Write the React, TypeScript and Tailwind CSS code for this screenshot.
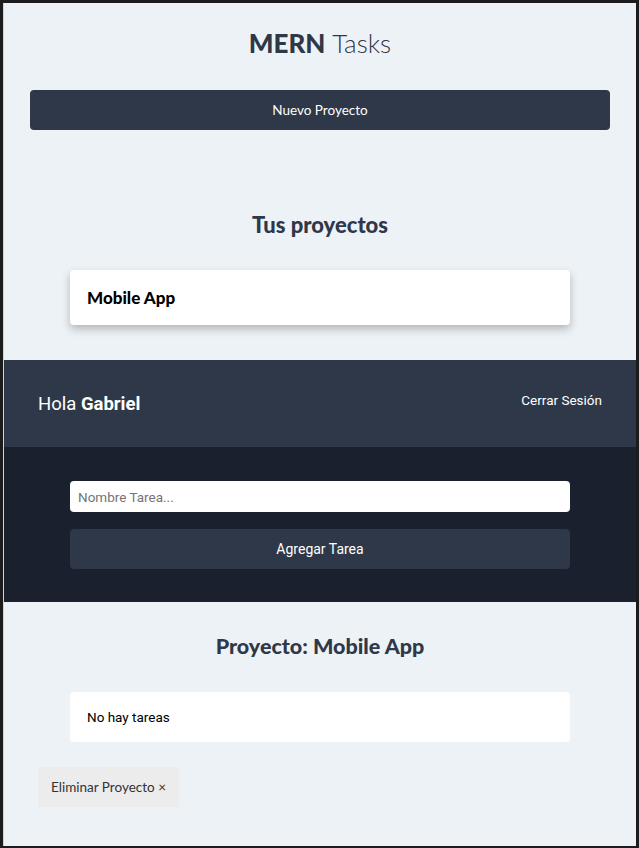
import React from 'react';

const heading = { fontFamily: 'Lato, "Open Sans", sans-serif' };
const body = { fontFamily: 'Roboto, "Liberation Sans", sans-serif' };

export default function App() {
    return (
        <div className="min-h-screen bg-[#1c1c1c] pt-[3px] pl-[3px] pr-[3px] pb-[2px] flex">
            <div className="flex-1 flex flex-col bg-[#edf2f6] border-l border-[#b9dcea]">
                {/* sidebar */}
                <aside className="pt-[24px] pb-[35px]">
                    <h1 className="text-center text-[26px] leading-[32px] text-[#2f3848]" style={heading}>
                        <span className="font-black">MERN</span> <span className="font-light">Tasks</span>
                    </h1>
                    <div className="px-[26px] mt-[31px]">
                        <button className="w-full h-[40px] rounded bg-[#2f3848] text-white text-[13.5px]" style={heading}>
                            Nuevo Proyecto
                        </button>
                    </div>
                    <h2 className="text-center text-[22px] leading-[28px] font-black text-[#2f3848] mt-[81px]" style={heading}>
                        Tus proyectos
                    </h2>
                    <div className="px-[66px] mt-[31px]">
                        <div className="bg-white rounded h-[55px] flex items-center px-[17px] shadow-[0_4px_8px_rgba(0,0,0,0.25)]">
                            <span className="text-[17px] font-black text-black" style={heading}>Mobile App</span>
                        </div>
                    </div>
                </aside>

                {/* barra */}
                <header className="bg-[#2f3848] h-[87px] flex items-center justify-between px-[34px]" style={body}>
                    <p className="text-white text-[18.5px] mt-[3px]">Hola <span className="font-bold">Gabriel</span></p>
                    <button className="text-white text-[13.5px] -mt-[6px]">Cerrar Sesión</button>
                </header>

                {/* formulario */}
                <div className="bg-[#1a202d] h-[155px] px-[66px] pt-[34px]" style={body}>
                    <input
                        type="text"
                        placeholder="Nombre Tarea..."
                        className="w-full h-[31px] rounded bg-white px-[8px] text-[13.5px] placeholder:text-[#757575] outline-none"
                    />
                    <button className="w-full h-[40px] mt-[17px] rounded bg-[#2f3848] text-white text-[14px]">
                        Agregar Tarea
                    </button>
                </div>

                {/* tareas */}
                <main className="flex-1 pt-[30px]">
                    <h2 className="text-center text-[21.5px] leading-[28px] font-black text-[#2f3848]" style={heading}>
                        Proyecto: Mobile App
                    </h2>
                    <div className="px-[66px] mt-[32px]">
                        <div className="bg-white rounded h-[50px] flex items-center px-[17px]">
                            <span className="text-[13.5px] text-black" style={body}>No hay tareas</span>
                        </div>
                    </div>
                    <div className="px-[34px] mt-[25px]">
                        <button className="h-[40px] px-[13px] bg-[#ececec] text-[#333] text-[13.5px]" style={heading}>
                            Eliminar Proyecto ×
                        </button>
                    </div>
                </main>
            </div>
        </div>
    );
}
